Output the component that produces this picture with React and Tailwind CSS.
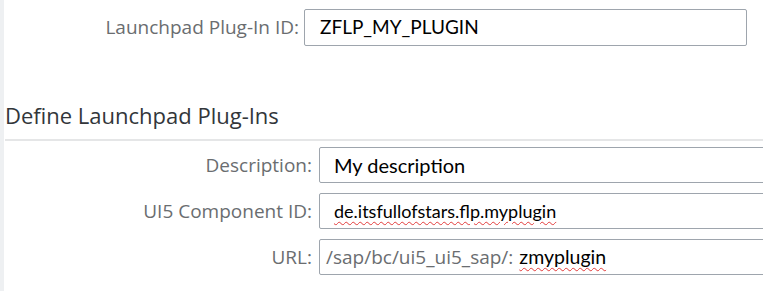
import React from "react";

const labelCls = "text-right text-[19px] text-[#6a6d70] font-['Open_Sans',sans-serif] leading-none whitespace-nowrap";
const boxCls = "h-[36px] border border-[#9ea5ad] rounded-[2px] bg-white flex items-center";
const valueCls = "text-black font-['Lato',sans-serif] whitespace-nowrap";
const squiggle = "underline decoration-wavy decoration-[#e23b3b] decoration-1 underline-offset-[3px]";

const FormRow = ({ label, children }) => (
  <div className="flex items-center">
    <div className={`w-[315px] shrink-0 pr-[7px] ${labelCls}`}>{label}</div>
    <div className={`flex-1 ${boxCls} -mr-[4px]`}>{children}</div>
  </div>
);

export default function App() {
  return (
    <div className="flex w-[763px] h-[297px] bg-white overflow-hidden">
      <div className="w-[4px] h-[291px] bg-[#eef0f2] shrink-0" />
      <div className="flex-1 flex flex-col">
        {/* plug-in id */}
        <div className="flex items-center mt-[9px]">
          <div className={`w-[300px] shrink-0 pr-[5px] ${labelCls}`}>Launchpad Plug-In ID:</div>
          <div className="w-[443px] h-[37px] border border-[#9ea5ad] rounded-[2px] flex items-center pl-[15px]">
            <span className={`${valueCls} text-[19px]`}>ZFLP_MY_PLUGIN</span>
          </div>
        </div>

        <h2 className="mt-[58px] pl-[1px] text-[22px] leading-none text-[#32363a] font-['Open_Sans',sans-serif]">
          Define Launchpad Plug-Ins
        </h2>
        <div className="mt-[13px] ml-[1px] h-[2px] bg-[#e5e6e7]" />

        <div className="mt-[6px] flex flex-col gap-[10px]">
          <FormRow label="Description:">
            <span className={`pl-[14px] text-[20px] ${valueCls}`}>My description</span>
          </FormRow>
          <FormRow label="UI5 Component ID:">
            <span className={`pl-[14px] text-[18px] ${valueCls}`}>
              <span className={squiggle}>de.itsfullofstars.flp.myplugin</span>
            </span>
          </FormRow>
          <FormRow label="URL:">
            <span className="pl-[6px] text-[19px] text-[#6a6d70] font-['Open_Sans',sans-serif] whitespace-nowrap">
              /sap/bc/ui5_ui5_sap/:
            </span>
            <span className={`ml-[6px] text-[19.5px] ${valueCls}`}>
              <span className={squiggle}>zmyplugin</span>
            </span>
          </FormRow>
        </div>
      </div>
    </div>
  );
}
